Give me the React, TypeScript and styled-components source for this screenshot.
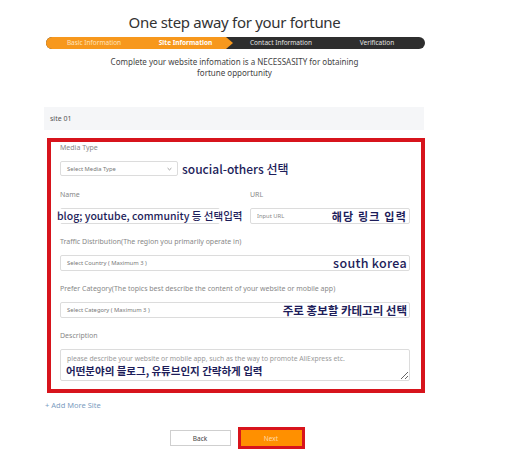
import React from "react";
import styled, { createGlobalStyle } from "styled-components";

const GlobalStyle = createGlobalStyle`
  html, body {
    margin: 0;
    padding: 0;
    background: #ffffff;
  }
  body {
    font-family: "Noto Sans", "Noto Sans CJK KR", sans-serif;
    color: #333;
  }
  * { box-sizing: border-box; }
`;

const Page = styled.div`
  padding-left: 44px;
  width: 505px;
  height: 463px;
  overflow: hidden;
`;

const Column = styled.div`
  width: 381px;
  padding-top: 12px;
  display: flex;
  flex-direction: column;
`;

const Title = styled.h1`
  margin: 0;
  text-align: center;
  font-size: 15px;
  line-height: 21px;
  font-weight: 400;
  color: #333;
  letter-spacing: -0.3px;
`;

const Steps = styled.div`
  margin: 4px 0 0 2px;
  width: 379px;
  height: 12px;
  border-radius: 6px;
  overflow: hidden;
  background: #2e2e2e;
  display: flex;
`;

const Step = styled.div<{ $done?: boolean; $current?: boolean }>`
  flex: ${(p) => (p.$current ? "0 0 91px" : "1 1 0")};
  display: flex;
  align-items: center;
  justify-content: center;
  font-size: 6.5px;
  line-height: 12px;
  white-space: nowrap;
  font-weight: ${(p) => (p.$current ? 700 : 400)};
  color: ${(p) => (p.$current ? "#fff" : p.$done ? "#ffe3bd" : "#e2e2e2")};
  background: ${(p) => (p.$done || p.$current ? "#f7981d" : "transparent")};
  clip-path: ${(p) =>
    p.$current
      ? "polygon(0 0, calc(100% - 7px) 0, 100% 50%, calc(100% - 7px) 100%, 0 100%)"
      : "none"};
  padding-right: ${(p) => (p.$current ? "4px" : "0")};
`;

const Subtitle = styled.p`
  margin: 7px 0 0;
  text-align: center;
  font-size: 8px;
  line-height: 11px;
  color: #444;
`;

const SiteBar = styled.div`
  margin-top: 29px;
  width: 380px;
  height: 23px;
  background: #f5f6f8;
  display: flex;
  align-items: center;
  padding-left: 6px;
  font-size: 7px;
  color: #555;
`;

const FormBox = styled.section`
  margin: 8px 0 0 3px;
  width: 378px;
  border: 4px solid #d7141c;
  padding: 1px 11px 8px 9px;
  display: flex;
  flex-direction: column;
  gap: 13px;
`;

const Group = styled.div`
  display: flex;
  flex-direction: column;
  gap: 8px;
`;

const Label = styled.label`
  font-size: 7px;
  line-height: 10px;
  color: #888;
  white-space: nowrap;
`;

const Row = styled.div`
  display: flex;
  align-items: center;
  gap: 4px;
`;

const Columns = styled.div`
  display: grid;
  grid-template-columns: 160px 160px;
  column-gap: 30px;
  margin-top: 1px;
`;

const FieldWrap = styled.div`
  position: relative;
`;

const SelectBox = styled.div<{ $width?: number; $tall?: boolean }>`
  width: ${(p) => (p.$width ? `${p.$width}px` : "350px")};
  height: ${(p) => (p.$tall ? "16px" : "15px")};
  border: 1px solid #dcdcdc;
  border-radius: 2px;
  background: #fff;
  display: flex;
  align-items: center;
  justify-content: space-between;
  padding: 0 5px 0 6px;
  font-size: 5.8px;
  color: #777;
`;

const TextInput = styled.input`
  display: block;
  width: 100%;
  height: 16px;
  border: 1px solid #dcdcdc;
  border-radius: 2px;
  padding: 0 6px;
  font-family: "Noto Sans", sans-serif;
  font-size: 5.8px;
  color: #555;
  outline: none;
  &::placeholder {
    color: #888;
  }
`;

const TextArea = styled.textarea`
  display: block;
  width: 350px;
  height: 32px;
  border: 1px solid #dcdcdc;
  border-radius: 2px;
  padding: 4px 6px;
  font-family: "Noto Sans", sans-serif;
  font-size: 6.8px;
  line-height: 9px;
  color: #555;
  outline: none;
  resize: both;
  &::placeholder {
    color: #999;
  }
`;

/* Hand-written notes laid over the form fields */
const Note = styled.span<{ $bold?: boolean; $size?: number; $spread?: number }>`
  font-family: "Noto Sans CJK KR", "Noto Sans", sans-serif;
  font-size: ${(p) => p.$size ?? 11}px;
  line-height: 14px;
  font-weight: ${(p) => (p.$bold ? 700 : 500)};
  letter-spacing: ${(p) => p.$spread ?? 0}px;
  color: #1d1d5a;
  white-space: nowrap;
`;

const NoteRight = styled(Note)`
  position: absolute;
  right: 3px;
  top: 50%;
  transform: translateY(-50%);
  background: #fff;
  padding-left: 4px;
`;

const NoteOverName = styled(Note)`
  position: absolute;
  z-index: 1;
  left: -3px;
  top: 50%;
  transform: translateY(-50%);
  background: #fff;
  padding-right: 2px;
`;

const NoteInArea = styled(Note)`
  position: absolute;
  left: 6px;
  bottom: 3px;
`;

const AddMore = styled.a`
  margin: 7px 0 0 1px;
  font-size: 7.5px;
  line-height: 10px;
  color: #7b9cc0;
  text-decoration: none;
`;

const Actions = styled.div`
  margin: 20px 0 0 2px;
  display: flex;
  justify-content: center;
  gap: 10px;
`;

const Button = styled.button<{ $primary?: boolean }>`
  width: 61px;
  height: 16px;
  border-radius: 0;
  font-family: "Noto Sans", sans-serif;
  font-size: 6.5px;
  padding: 0;
  cursor: pointer;
  border: 1px solid ${(p) => (p.$primary ? "#ff8f00" : "#cfcfcf")};
  background: ${(p) => (p.$primary ? "#ff9000" : "#fff")};
  color: ${(p) => (p.$primary ? "#ffd9a6" : "#444")};
  box-shadow: ${(p) => (p.$primary ? "0 0 0 3px #d8141c" : "none")};
`;

const Chevron = () => (
  <svg width="5" height="4" viewBox="0 0 5 4" aria-hidden="true">
    <path d="M0.6 1.1 L2.5 2.9 L4.4 1.1" fill="none" stroke="#888" strokeWidth="0.8" />
  </svg>
);

export default function App() {
  return (
    <Page>
      <GlobalStyle />
      <Column>
        <Title>One step away for your fortune</Title>
        <Steps>
          <Step $done>Basic Information</Step>
          <Step $current>Site Information</Step>
          <Step>Contact Information</Step>
          <Step>Verification</Step>
        </Steps>
        <Subtitle>
          Complete your website infomation is a NECESSASITY for obtaining
          <br />
          fortune opportunity
        </Subtitle>

        <SiteBar>site 01</SiteBar>

        <FormBox>
          <Group>
            <Label>Media Type</Label>
            <Row>
              <SelectBox $width={118}>
                <span>Select Media Type</span>
                <Chevron />
              </SelectBox>
              <Note $size={12}>soucial-others 선택</Note>
            </Row>
          </Group>

          <Columns>
            <Group>
              <Label>Name</Label>
              <FieldWrap>
                <TextInput />
                <NoteOverName $size={10.5}>blog; youtube, community 등 선택입력</NoteOverName>
              </FieldWrap>
            </Group>
            <Group>
              <Label>URL</Label>
              <FieldWrap>
                <TextInput placeholder="Input URL" />
                <NoteRight $bold $size={11} $spread={1.2}>해당 링크 입력</NoteRight>
              </FieldWrap>
            </Group>
          </Columns>

          <Group>
            <Label>Traffic Distribution(The region you primarily operate in)</Label>
            <FieldWrap>
              <SelectBox $tall>
                <span>Select Country ( Maximum 3 )</span>
              </SelectBox>
              <NoteRight $size={12.5} $spread={0.3}>south korea</NoteRight>
            </FieldWrap>
          </Group>

          <Group>
            <Label>
              Prefer Category(The topics best describe the content of your website or mobile app)
            </Label>
            <FieldWrap>
              <SelectBox $tall>
                <span>Select Category ( Maximum 3 )</span>
              </SelectBox>
              <NoteRight $bold $size={11.5}>주로 홍보할 카테고리 선택</NoteRight>
            </FieldWrap>
          </Group>

          <Group>
            <Label>Description</Label>
            <FieldWrap>
              <TextArea placeholder="please describe your website or mobile app, such as the way to promote AliExpress etc." />
              <NoteInArea $bold $size={10.5}>어떤분야의 블로그, 유튜브인지 간략하게 입력</NoteInArea>
            </FieldWrap>
          </Group>
        </FormBox>

        <AddMore href="#">+ Add More Site</AddMore>

        <Actions>
          <Button>Back</Button>
          <Button $primary>Next</Button>
        </Actions>
      </Column>
    </Page>
  );
}
